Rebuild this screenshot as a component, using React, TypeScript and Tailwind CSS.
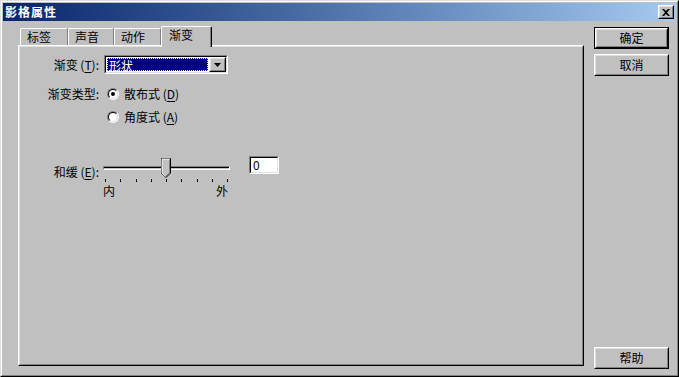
import React from "react";

const font = { fontFamily: '"Noto Sans CJK SC", "Noto Sans", sans-serif' };

function Raised({ children, className = "" }: { children?: React.ReactNode; className?: string }) {
  return (
    <div className={`border border-t-white border-l-white border-r-black border-b-black ${className}`}>
      <div className="h-full w-full border border-t-[#dfdfdf] border-l-[#dfdfdf] border-r-[#808080] border-b-[#808080] flex items-center justify-center">
        {children}
      </div>
    </div>
  );
}

function Sunken({ children, className = "" }: { children?: React.ReactNode; className?: string }) {
  return (
    <div className={`border border-t-[#808080] border-l-[#808080] border-r-white border-b-white ${className}`}>
      <div className="h-full w-full border border-t-black border-l-black border-r-[#dfdfdf] border-b-[#dfdfdf] bg-white flex items-center">
        {children}
      </div>
    </div>
  );
}

function Radio({ checked, label }: { checked?: boolean; label: React.ReactNode }) {
  return (
    <div className="flex items-center h-[14px]">
      <div className="w-[12px] h-[12px] rounded-full border border-t-[#808080] border-l-[#808080] border-r-white border-b-white">
        <div className="w-full h-full rounded-full border border-t-black border-l-black border-r-[#dfdfdf] border-b-[#dfdfdf] bg-white flex items-center justify-center">
          {checked && <div className="w-[4px] h-[4px] rounded-full bg-black" />}
        </div>
      </div>
      <span className="ml-[5px] text-[12px] leading-[14px] text-black">{label}</span>
    </div>
  );
}

const U = ({ c }: { c: string }) => <span className="underline underline-offset-2">{c}</span>;

const tabs = ["标签", "声音", "动作"];

export default function App() {
  const ticks = Array.from({ length: 9 }, (_, i) => i);
  return (
    <div style={font} className="w-[679px] h-[377px] bg-[#c0c0c0] border border-t-[#dfdfdf] border-l-[#dfdfdf] border-r-black border-b-black overflow-hidden">
      <div className="h-full w-full border border-t-white border-l-white border-r-[#808080] border-b-[#808080] flex flex-col">
        {/* title bar */}
        <div className="h-[18px] mx-px mt-px flex items-center justify-between bg-gradient-to-r from-[#0a246a] to-[#a6caf0] pl-[2px] pr-[2px]">
          <span className="text-[12px] font-bold text-white leading-none tracking-[1px]">影格属性</span>
          <Raised className="w-[16px] h-[14px] bg-[#c0c0c0]">
            <svg width="8" height="7" viewBox="0 0 8 7">
              <path d="M0 0h2l2 2 2-2h2L5 3.5 8 7H6L4 5 2 7H0l3-3.5z" fill="black" />
            </svg>
          </Raised>
        </div>

        <div className="flex pl-[16px] pt-[5px]">
          {/* left: tabs + panel */}
          <div className="w-[566px] flex flex-col">
            <div className="h-[19px] flex items-end relative z-10">
              {tabs.map((t, i) => (
                <div
                  key={t}
                  className={`h-[17px] ${i === 0 ? "w-[48px] ml-[2px]" : i === 1 ? "w-[46px]" : "w-[47px]"} border-t border-l border-r border-t-white border-l-white border-r-black rounded-t-[2px] text-[12px] leading-[16px] pl-[6px] text-black`}
                >
                  <div className="h-full border-r border-r-[#808080] -mr-px">{t}</div>
                </div>
              ))}
              <div className="h-[21px] w-[51px] -mb-[2px] bg-[#c0c0c0] border-t border-l border-r border-t-white border-l-white border-r-black rounded-t-[2px] text-[12px] leading-[16px] pl-[7px] text-black">
                <div className="h-full border-r border-r-[#808080]">渐变</div>
              </div>
            </div>
            <div className="h-[321px] border border-t-white border-l-white border-r-black border-b-black">
              <div className="h-full border border-t-[#dfdfdf] border-l-[#dfdfdf] border-r-[#808080] border-b-[#808080] pt-[8px]">
                {/* row: 渐变 */}
                <div className="flex items-center h-[19px]">
                  <div className="w-[81px] text-right text-[12px] text-black pr-[2px]">渐变 (<U c="T" />):</div>
                  <Sunken className="ml-[3px] w-[124px] h-[19px]">
                    <div className="flex-1 h-full p-px">
                      <div className="h-full bg-[#000080] border border-dotted border-[#ffff80] text-white text-[12px] leading-[13px] pl-px">形状</div>
                    </div>
                    <Raised className="w-[17px] h-[15px] bg-[#c0c0c0]">
                      <svg width="7" height="4" viewBox="0 0 7 4">
                        <path d="M0 0h7L3.5 4z" fill="black" />
                      </svg>
                    </Raised>
                  </Sunken>
                </div>
                {/* row: 渐变类型 */}
                <div className="flex items-center mt-[11px]">
                  <div className="w-[81px] text-right text-[12px] text-black pr-[2px]">渐变类型:</div>
                  <div className="ml-[6px]">
                    <Radio checked label={<>散布式 (<U c="D" />)</>} />
                  </div>
                </div>
                <div className="flex items-center mt-[7px] pl-[87px]">
                  <Radio label={<>角度式 (<U c="A" />)</>} />
                </div>
                {/* row: 和缓 */}
                <div className="flex items-start mt-[34px]">
                  <div className="w-[81px] text-right text-[12px] text-black pr-[2px] mt-[5px]">和缓 (<U c="E" />):</div>
                  <div className="ml-[2px] w-[127px] flex flex-col">
                    <div className="relative h-[20px]">
                      <div className="absolute left-0 right-0 top-[8px] h-[4px] border border-t-[#808080] border-l-[#808080] border-r-white border-b-white">
                        <div className="h-full border-t border-t-black" />
                      </div>
                      <svg className="absolute left-[58px] top-0" width="10" height="20" viewBox="0 0 10 20">
                        <path d="M0.5 0.5H9.5V15L5 19.5L0.5 15Z" fill="#c0c0c0" stroke="black" />
                        <path d="M1 15V1H9" fill="none" stroke="white" />
                        <path d="M8.5 1.5V14.6L5 18" fill="none" stroke="#808080" />
                        <path d="M1 15L4.5 18.5" fill="none" stroke="#dfdfdf" />
                      </svg>
                    </div>
                    <div className="flex justify-between px-[2px] h-[4px] mt-[1px]">
                      {ticks.map((i) => (
                        <div key={i} className="w-px h-[3px] bg-black" />
                      ))}
                    </div>
                    <div className="flex justify-between text-[12px] text-black leading-[14px] mt-px pr-[2px]">
                      <span>内</span>
                      <span>外</span>
                    </div>
                  </div>
                  <Sunken className="ml-[19px] w-[30px] h-[18px] mt-[-2px]">
                    <span className="text-[12px] leading-none text-black pl-[2px]">0</span>
                  </Sunken>
                </div>
              </div>
            </div>
          </div>

          {/* right: buttons */}
          <div className="ml-[10px] flex flex-col h-[342px]">
            <div className="mt-[1px] border border-black w-[75px] h-[22px]">
              <Raised className="h-full w-full bg-[#c0c0c0]">
                <span className="text-[12px] text-black leading-none">确定</span>
              </Raised>
            </div>
            <Raised className="mt-[5px] w-[75px] h-[22px] bg-[#c0c0c0]">
              <span className="text-[12px] text-black leading-none">取消</span>
            </Raised>
            <Raised className="mt-auto mb-[-1px] w-[75px] h-[22px] bg-[#c0c0c0]">
              <span className="text-[12px] text-black leading-none">帮助</span>
            </Raised>
          </div>
        </div>
      </div>
    </div>
  );
}
